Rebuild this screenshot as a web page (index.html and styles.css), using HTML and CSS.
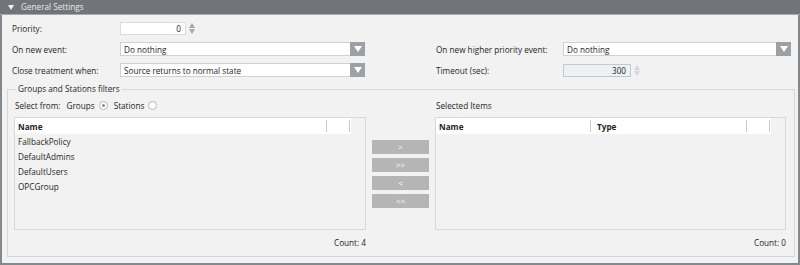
FILE: index.html
```html
<!DOCTYPE html>
<html lang="en">
<head>
  <meta charset="UTF-8">
  <title>General Settings</title>
  <link rel="stylesheet" href="styles.css">
</head>
<body>
  <div class="panel">
    <div class="panel-head"><span class="caret"></span>General Settings</div>
    <div class="panel-body">
      <div class="form-grid">
        <label class="lbl">Priority:</label>
        <div class="ctl">
          <div class="num"><span>0</span></div>
          <span class="spin"><i class="up"></i><i class="down"></i></span>
        </div>
        <div></div><div></div><div></div>

        <label class="lbl">On new event:</label>
        <div class="combo"><span>Do nothing</span><b class="arrow"></b></div>
        <div></div>
        <label class="lbl lbl-r">On new higher priority event:</label>
        <div class="combo"><span>Do nothing</span><b class="arrow"></b></div>

        <label class="lbl">Close treatment when:</label>
        <div class="combo"><span>Source returns to normal state</span><b class="arrow"></b></div>
        <div></div>
        <label class="lbl lbl-r">Timeout (sec):</label>
        <div class="ctl">
          <div class="num num-off"><span>300</span></div>
          <span class="spin spin-off"><i class="up"></i><i class="down"></i></span>
        </div>
      </div>

      <fieldset class="filters">
        <legend>Groups and Stations filters</legend>
        <div class="lists">
          <div class="select-from">
            <span>Select from:</span>
            <span class="opt">Groups <i class="radio on"></i></span>
            <span class="opt">Stations <i class="radio"></i></span>
          </div>
          <div></div>
          <div class="sel-title">Selected Items</div>

          <div class="table">
            <div class="thead left-head">
              <span class="col-name">Name</span>
              <i class="sep"></i><i class="sep"></i>
            </div>
            <div class="row">FallbackPolicy</div>
            <div class="row">DefaultAdmins</div>
            <div class="row">DefaultUsers</div>
            <div class="row">OPCGroup</div>
          </div>
          <div class="moves">
            <button class="mv">&gt;</button>
            <button class="mv">&gt;&gt;</button>
            <button class="mv">&lt;</button>
            <button class="mv">&lt;&lt;</button>
          </div>
          <div class="table">
            <div class="thead right-head">
              <span class="col-name name-wide">Name</span>
              <i class="sep sep-type"></i>
              <span class="col-name type">Type</span>
              <i class="sep"></i><i class="sep"></i>
            </div>
          </div>

          <div class="count">Count: 4</div>
          <div></div>
          <div class="count">Count: 0</div>
        </div>
      </fieldset>
    </div>
  </div>
</body>
</html>
```

FILE: styles.css
```css
body {
  margin: 0;
  font-family: 'Open Sans', 'Noto Sans', Arial, sans-serif;
  font-size: 8.2px;
  color: #262626;
  background: #fff;
}
.panel {
  width: 800px;
  height: 265px;
  box-sizing: border-box;
  border: 2px solid #85888b; /* outer frame */
  border-top: none;
  background: #f2f2f2;
  display: flex;
  flex-direction: column;
}
.panel-head {
  height: 14px;
  margin: 0 -2px;
  background: #717579;
  color: #e9eaeb;
  font-size: 8.2px;
  line-height: 14px;
  padding-left: 8px;
  border-bottom: 1px solid #a9acaf;
  display: flex;
  align-items: center;
}
.caret {
  width: 0;
  height: 0;
  border-left: 3px solid transparent;
  border-right: 3px solid transparent;
  border-top: 5px solid #f4f4f4;
  margin-right: 7px;
}
.panel-body {
  flex: 1;
  padding: 6px 3px 6px 5px;
  display: flex;
  flex-direction: column;
}

/* top settings form */
.form-grid {
  display: grid;
  grid-template-columns: 113px 245px 71px 127px 228px;
  grid-auto-rows: 14px;
  row-gap: 7px;
  align-items: center;
}
.lbl {
  padding-left: 5px;
  white-space: nowrap;
}
.lbl-r {
  padding-left: 0;
}
.ctl {
  display: flex;
  align-items: center;
  gap: 3px;
}
.num {
  width: 66px;
  height: 13px;
  box-sizing: border-box;
  background: #fff;
  border: 1px solid #dcdcdc;
  text-align: right;
  padding-right: 4px;
  line-height: 11px;
}
.num-off {
  width: 68px;
  background: #eef0f1;
  border-color: #bccad4;
}
.spin {
  display: flex;
  flex-direction: column;
  gap: 1px;
}
.spin i {
  width: 0;
  height: 0;
  border-left: 3px solid transparent;
  border-right: 3px solid transparent;
}
.spin .up { border-bottom: 5px solid #a3a8ad; }
.spin .down { border-top: 5px solid #a3a8ad; }
.spin-off .up { border-bottom-color: #d3d7db; }
.spin-off .down { border-top-color: #d3d7db; }
.combo {
  height: 14px;
  box-sizing: border-box;
  background: #fff;
  border: 1px solid #cfd2d4;
  display: flex;
  align-items: center;
  padding-left: 3px;
}
.combo span {
  flex: 1;
}
.arrow {
  width: 15px;
  height: 14px;
  margin: -1px -1px -1px 0;
  background: #9ca1a5;
  display: flex;
  align-items: center;
  justify-content: center;
}
.arrow::after {
  content: '';
  border-left: 4px solid transparent;
  border-right: 4px solid transparent;
  border-top: 6px solid #fff;
}

/* groups and stations */
.filters {
  margin: 7px 0 0 0;
  padding: 0 8px 0 6px;
  border: 1px solid #d6d6d6;
  flex: 1;
}
.filters legend {
  padding: 0 2px;
  margin-left: 2px;
  line-height: 10px;
}
.lists {
  display: grid;
  grid-template-columns: 352px 57px 351px;
  grid-template-rows: 23px 113px 24px;
  column-gap: 6px;
  align-items: center;
}
.select-from {
  display: flex;
  align-items: center;
  padding-left: 1px;
}
.opt {
  display: flex;
  align-items: center;
  gap: 4px;
  margin-left: 6px;
}
.radio {
  width: 9px;
  height: 9px;
  box-sizing: border-box;
  border: 1px solid #b5b5b5;
  border-radius: 50%;
  background: #fff;
  display: flex;
  align-items: center;
  justify-content: center;
}
.radio.on::after {
  content: '';
  width: 3px;
  height: 3px;
  border-radius: 50%;
  background: #8a8a8a;
}
.sel-title {
  padding-left: 1px;
}
.table {
  align-self: stretch;
  border: 1px solid #d8d8d8;
  box-sizing: border-box;
}
.thead {
  height: 16px;
  background: #fff;
  display: flex;
  align-items: center;
  font-weight: bold;
  margin-right: 14px;
}
.left-head .col-name {
  flex: 1;
}
.col-name {
  padding-left: 3px;
}
.name-wide {
  width: 151px;
}
.type {
  flex: 1;
  padding-left: 6px;
}
.sep {
  width: 1px;
  height: 12px;
  background: #c8c8c8;
  margin-right: 22px;
}
.sep-type {
  margin-right: 0;
}
.sep:last-child {
  margin-right: 1px;
}
.row {
  height: 15px;
  line-height: 15px;
  padding-left: 3px;
}
.moves {
  display: flex;
  flex-direction: column;
  gap: 4px;
}
.mv {
  height: 14px;
  border: none;
  background: #b5b5b5;
  color: #fff;
  font-family: inherit;
  font-size: 8px;
  padding: 0;
}
.count {
  text-align: right;
}
```
